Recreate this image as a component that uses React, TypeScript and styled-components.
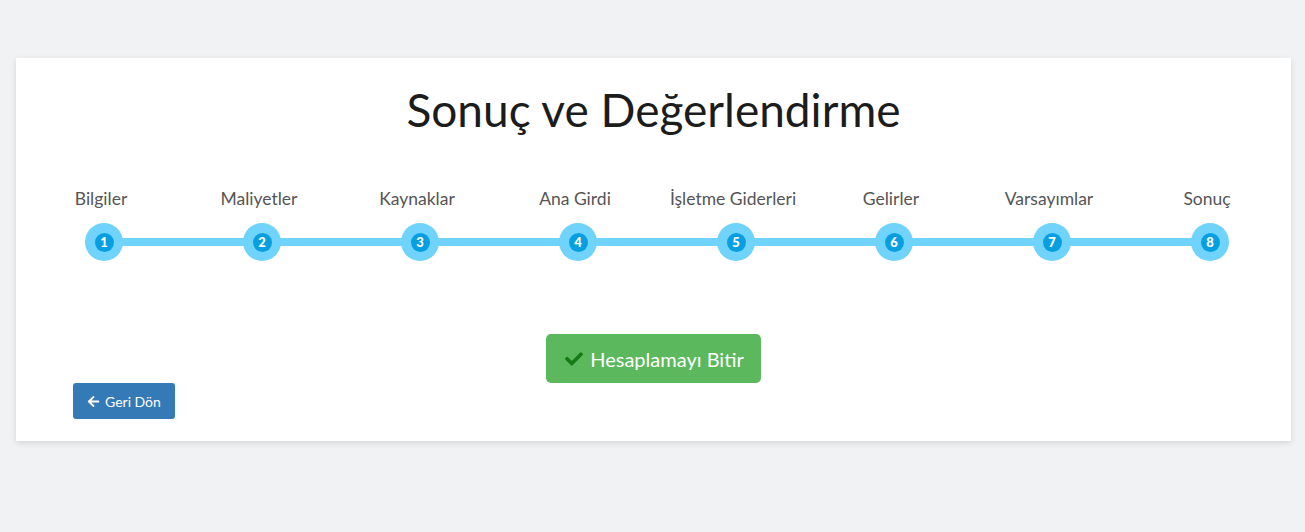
import styled, { createGlobalStyle } from 'styled-components';
import { FaArrowLeft, FaCheck } from 'react-icons/fa';

const steps = [
  'Bilgiler',
  'Maliyetler',
  'Kaynaklar',
  'Ana Girdi',
  'İşletme Giderleri',
  'Gelirler',
  'Varsayımlar',
  'Sonuç',
];

const GlobalStyle = createGlobalStyle`
  body {
    margin: 0;
    background: #f1f2f4;
    font-family: Lato, "Open Sans", sans-serif;
  }
`;

const App = () => {
  return (
    <Page>
      <GlobalStyle />
      <Card>
        <Title>Sonuç ve Değerlendirme</Title>
        <Steps>
          {steps.map((label, i) => (
            <Step key={label} first={i === 0} last={i === steps.length - 1}>
              <StepLabel>{label}</StepLabel>
              <Dot>
                <DotInner>{i + 1}</DotInner>
              </Dot>
            </Step>
          ))}
        </Steps>
        <FinishRow>
          <FinishButton>
            <CheckIcon />
            Hesaplamayı Bitir
          </FinishButton>
        </FinishRow>
        <BackButton>
          <FaArrowLeft size={13} />
          Geri Dön
        </BackButton>
      </Card>
    </Page>
  );
};

const Page = styled.div`
  padding: 58px 14px 90px 16px;
`;

const Card = styled.div`
  background: #fff;
  box-shadow: 0 2px 6px rgba(0, 0, 0, 0.12);
  padding: 24px 0 22px;
`;

const Title = styled.h1`
  margin: 0;
  text-align: center;
  font-weight: 400;
  font-size: 46px;
  line-height: 56px;
  color: #1c1c1c;
`;

const Steps = styled.div`
  display: grid;
  grid-template-columns: repeat(8, 158px);
  margin: 51px 0 0 9px;
`;

const Step = styled.div<{ first: boolean; last: boolean }>`
  position: relative;
  display: flex;
  flex-direction: column;
  align-items: center;

  &::before {
    content: '';
    position: absolute;
    top: 49px;
    height: 8px;
    left: ${({ first }) => (first ? '50%' : '0')};
    right: ${({ last }) => (last ? '50%' : '0')};
    background: #6fd3fb;
  }
`;

const StepLabel = styled.div`
  margin-right: 6px;
  font-size: 17.5px;
  line-height: 20px;
  color: #555;
  white-space: nowrap;
`;

const Dot = styled.div`
  position: relative;
  margin-top: 14px;
  width: 38px;
  height: 38px;
  border-radius: 50%;
  background: #6fd3fb;
  display: flex;
  align-items: center;
  justify-content: center;
`;

const DotInner = styled.span`
  width: 19px;
  height: 19px;
  border-radius: 50%;
  background: #089fe1;
  color: #fff;
  font-size: 13px;
  font-weight: 900;
  line-height: 19px;
  text-align: center;
`;

const FinishRow = styled.div`
  display: flex;
  justify-content: center;
  margin-top: 73px;
`;

const FinishButton = styled.button`
  display: inline-flex;
  align-items: center;
  gap: 7px;
  height: 49px;
  padding: 0 17px 0 19px;
  border: none;
  border-radius: 5px;
  background: #5cb85c;
  color: #fff;
  font-family: inherit;
  font-size: 20px;
  cursor: pointer;
`;

const CheckIcon = styled(FaCheck)`
  color: #167a16;
  font-size: 18px;
`;

const BackButton = styled.button`
  display: inline-flex;
  align-items: center;
  gap: 5px;
  margin-left: 57px;
  height: 36px;
  padding: 0 14px 0 14px;
  border: none;
  border-radius: 3px;
  background: #337ab7;
  color: #fff;
  font-family: inherit;
  font-size: 14px;
  cursor: pointer;
`;

export default App;
